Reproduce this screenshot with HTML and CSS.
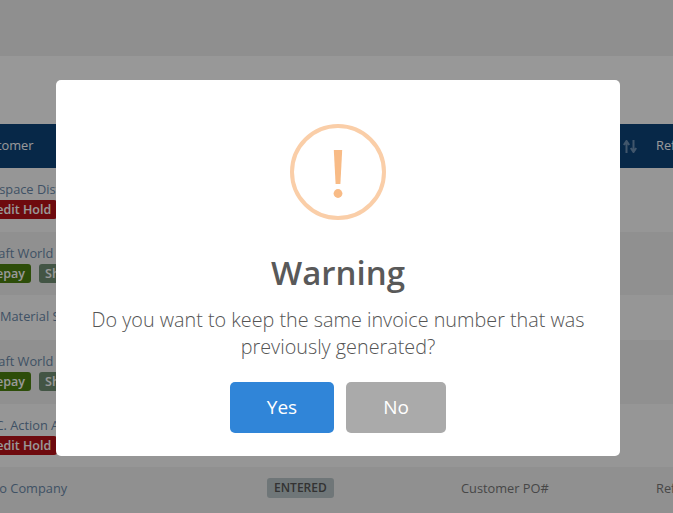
FILE: index.html
```html
<!DOCTYPE html>
<html lang="en">
<head>
  <meta charset="UTF-8" />
  <meta name="viewport" content="width=device-width, initial-scale=1.0"/>
  <title>Orders</title>
  <link rel="stylesheet" href="styles.css">
</head>
<body>

  <!-- Page behind the dialog -->
  <div class="page-top"></div>
  <div class="toolbar"></div>
  <div class="orders">
    <div class="row head">
      <div class="customer">Customer</div>
      <div class="status"></div>
      <div class="po"></div>
      <div class="sort">
        <svg width="14" height="13" viewBox="0 0 14 13"><path d="M3.500 13V2M.8 5l2.700-4 2.700 4M10.500 0v11M7.800 8l2.700 4 2.700-4" fill="none" stroke="#6d8fb3" stroke-width="2"/></svg>
      </div>
      <div class="ref">Reference</div>
    </div>
    <div class="row tall">
      <div class="customer"><a class="aero">Aerospace Distributors</a><div class="tags"><span class="tag red">Credit Hold</span></div></div>
    </div>
    <div class="row tall alt">
      <div class="customer"><a class="craft">Craft World</a><div class="tags"><span class="tag green">Prepay</span><span class="tag grey">Ship</span></div></div>
    </div>
    <div class="row short">
      <div class="customer"><a class="material">Material Supply</a></div>
    </div>
    <div class="row tall alt">
      <div class="customer"><a class="craft">Craft World</a><div class="tags"><span class="tag green">Prepay</span><span class="tag grey">Ship</span></div></div>
    </div>
    <div class="row tall">
      <div class="customer"><a class="action">A.C. Action Auto</a><div class="tags"><span class="tag red">Credit Hold</span></div></div>
    </div>
    <div class="row last alt">
      <div class="customer"><a class="demo">Demo Company</a></div>
      <div class="status"><span class="tag entered">ENTERED</span></div>
      <div class="po">Customer PO#</div>
      <div class="sort"></div>
      <div class="ref">Reference</div>
    </div>
  </div>

  <!-- Dialog -->
  <div class="overlay">
    <div class="modal">
      <div class="warn-icon">
        <svg width="16" height="56" viewBox="0 0 16 56"><path d="M3.800 0h8.400l-1.800 34H5.600z" fill="#f8bb86"/><circle cx="8" cy="43.500" r="4.400" fill="#f8bb86"/></svg>
      </div>
      <h2>Warning</h2>
      <p>Do you want to keep the same invoice number that was previously generated?</p>
      <div class="actions">
        <button class="btn yes">Yes</button>
        <button class="btn no">No</button>
      </div>
    </div>
  </div>

</body>
</html>
```

FILE: styles.css
```css
* {
  box-sizing: border-box;
}

html, body {
  height: 100%;
}

body {
  margin: 0;
  overflow: hidden;
  background: #fdfdfd;
  font-family: "Open Sans", sans-serif;
  font-size: 12.8px;
  color: #777;
}

.page-top {
  height: 56px;
  background: #eeeeee;
}

.toolbar {
  height: 68px;
  background: #fdfdfd;
}

/* Table */
.orders {
  width: 760px;
}

.row {
  display: grid;
  grid-template-columns: 267px 194px 161px 34px 72px;
  background: #fbfbfb;
}

.row.alt {
  background: #f0f0f0;
}

.row.tall {
  height: 63.5px;
  padding-top: 12px;
}

.row.short {
  height: 45px;
  padding-top: 12px;
}

.row.last {
  height: 46px;
  padding-bottom: 4px;
  align-items: center;
}

.row.head {
  height: 44px;
  padding-bottom: 2px;
  align-items: center;
  background: #0d4379;
  color: #fff;
}

.customer {
  white-space: nowrap;
  overflow: hidden;
  color: #6a88a8;
}

.customer a {
  display: block;
  line-height: 18px;
}

.head .customer {
  color: #fff;
  margin-left: -25px;
  overflow: visible;
}

.customer a.aero {
  margin-left: -29px;
}

.customer a.craft {
  margin-left: -15px;
}

.customer a.material {
  margin-left: 0;
}

.customer a.action {
  margin-left: -16px;
}

.customer a.demo {
  margin-left: -29px;
}

.tags {
  display: flex;
  gap: 8px;
  margin-left: -23px;
  margin-top: 2px;
}

.tag {
  display: inline-block;
  height: 19px;
  padding: 0 6px;
  line-height: 19px;
  border-radius: 3px;
  font-size: 12.5px;
  font-weight: 600;
  color: #fff;
}

.tag.red {
  background: #b81218;
}

.tag.green {
  background: #4c8010;
}

.tag.grey {
  background: #708e74;
}

.tag.entered {
  height: 20px;
  padding: 0 7px;
  background: #b9c5c8;
  color: #555;
  font-size: 12px;
  line-height: 20px;
}

.sort {
  display: flex;
  align-items: center;
  margin: 2px 0 0 1px;
}

.ref {
  white-space: nowrap;
}

/* Dialog */
.overlay {
  position: fixed;
  top: 0;
  left: 0;
  right: 0;
  bottom: 0;
  padding: 80px 0 0 56px;
  background: rgba(0, 0, 0, 0.4);
}

.modal {
  width: 564px;
  height: 376px;
  padding-top: 44px;
  background: #fff;
  border-radius: 5px;
  text-align: center;
}

.warn-icon {
  display: flex;
  justify-content: center;
  width: 96px;
  height: 96px;
  margin: 0 auto;
  padding-top: 22px;
  border: 4px solid #facea8;
  border-radius: 50%;
}

.modal h2 {
  margin: 30px 0 0;
  font-size: 33px;
  line-height: 45px;
  font-weight: 600;
  color: #595959;
}

.modal p {
  margin: 11px 0 0;
  padding: 0 20px;
  font-size: 19.8px;
  line-height: 27px;
  font-weight: 300;
  color: #545454;
}

.actions {
  display: flex;
  justify-content: center;
  gap: 12px;
  margin-top: 22px;
}

.btn {
  height: 51px;
  padding: 0 0 2px;
  border: none;
  border-radius: 5px;
  font-family: "Open Sans", sans-serif;
  font-size: 19px;
  color: #fff;
}

.btn.yes {
  width: 104px;
  background: #3085d8;
}

.btn.no {
  width: 100px;
  background: #aaaaaa;
}
```
